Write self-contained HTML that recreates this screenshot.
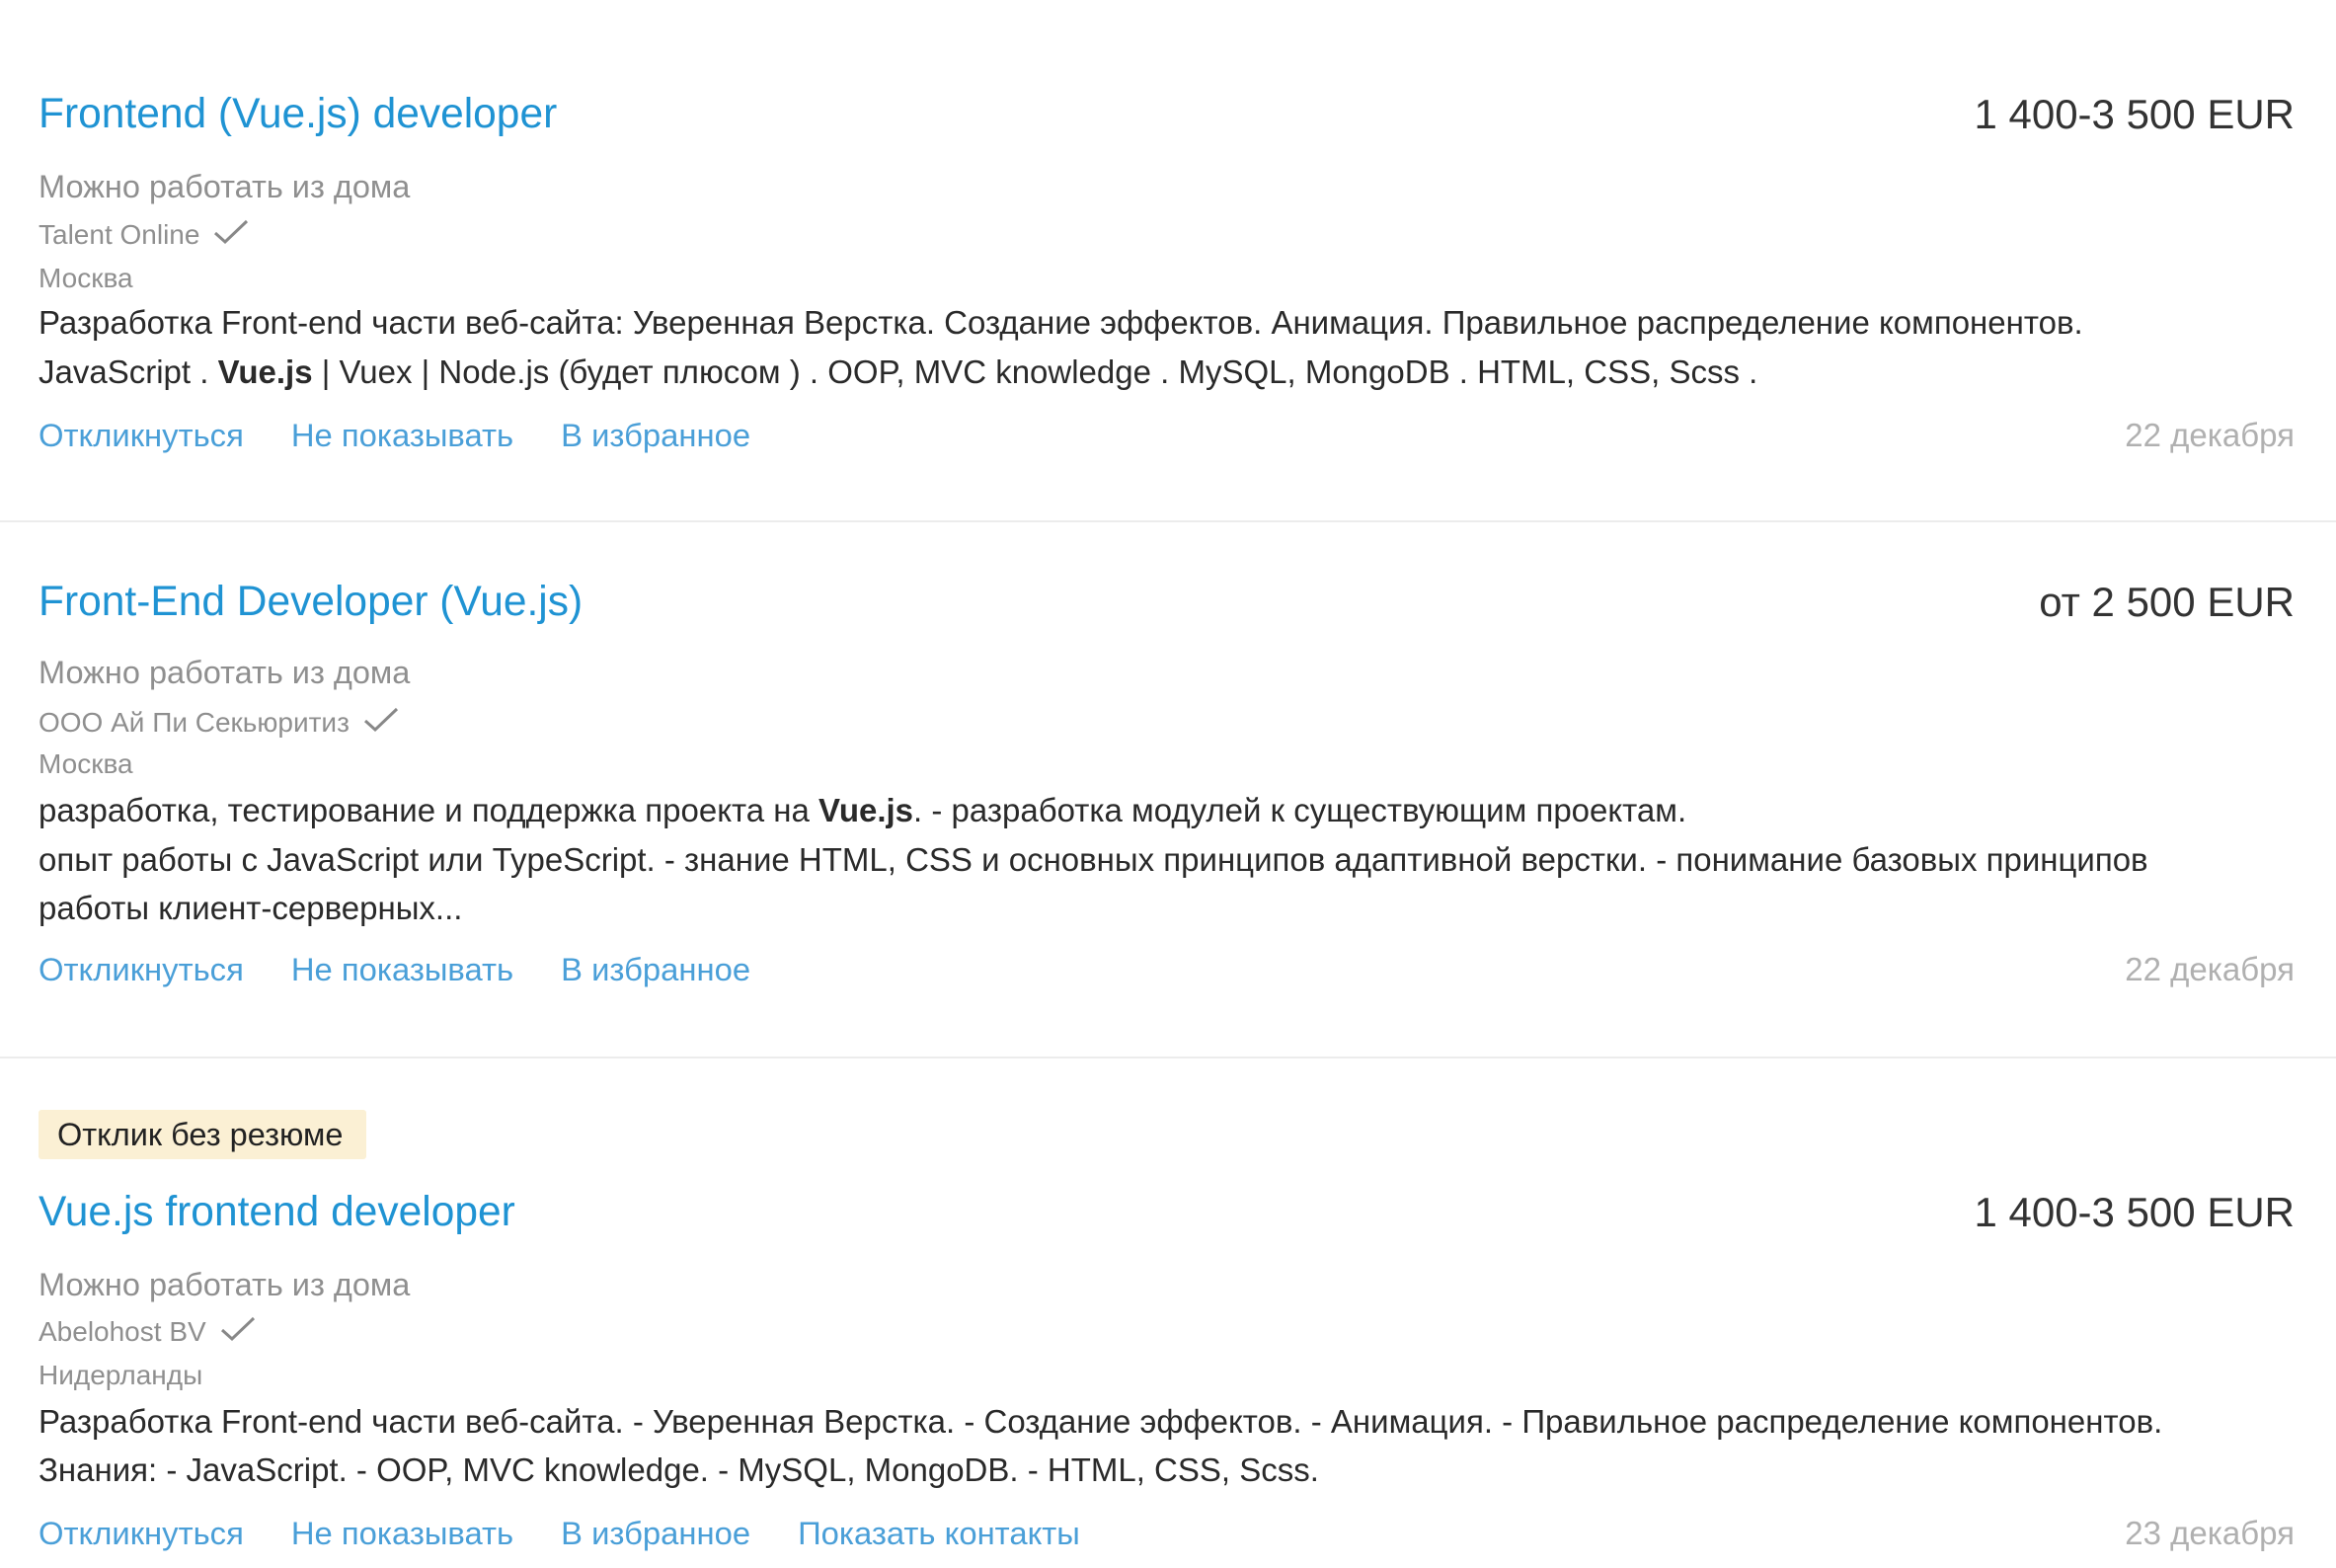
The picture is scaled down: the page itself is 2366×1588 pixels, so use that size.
<!DOCTYPE html>
<html><head><meta charset="utf-8"><style>
body{margin:0;width:2366px;height:1588px;background:#fff;position:relative;overflow:hidden;font-family:"Liberation Sans",Arial,sans-serif;}
.l{position:absolute;left:39px;height:50px;line-height:50px;white-space:nowrap;}
.r{position:absolute;right:42px;height:50px;line-height:50px;white-space:nowrap;}
.t{font-size:42.5px;color:#1f93d3;}
.s{font-size:42px;color:#333;}
.m{font-size:32.5px;color:#8f8f8f;}
.c{font-size:28px;color:#8f8f8f;}
.d{font-size:33px;color:#2a2a2a;}
.k{font-size:32.8px;color:#4a9fd8;}
.k span{margin-right:48px;}
.dt{font-size:33px;color:#b0b0b0;}
.sep{position:absolute;left:0;width:2366px;height:2px;background:#ececec;}
.chk{display:inline-block;vertical-align:middle;margin-left:14px;margin-top:-10px;}
.badge{position:absolute;left:39px;top:1124px;width:332px;height:50px;background:#fbf0d4;border-radius:3px;font-size:32.5px;line-height:50px;color:#222;text-indent:19px;}
</style></head><body>
<svg width="0" height="0" style="position:absolute"><defs><symbol id="ck" viewBox="0 0 36 26"><path d="M2 14 L12 23 L34 2" fill="none" stroke="#888" stroke-width="3"/></symbol></defs></svg>

<div class="l t" style="top:91px">Frontend (Vue.js) developer</div>
<div class="r s" style="top:91px">1 400-3 500 EUR</div>
<div class="l m" style="top:164px">Можно работать из дома</div>
<div class="l c" style="top:213px">Talent Online<svg class="chk" width="36" height="26"><use href="#ck"/></svg></div>
<div class="l c" style="top:257px">Москва</div>
<div class="l d" style="top:302px">Разработка Front-end части веб-сайта: Уверенная Верстка. Создание эффектов. Анимация. Правильное распределение компонентов.</div>
<div class="l d" style="top:352px">JavaScript . <b>Vue.js</b> | Vuex | Node.js (будет плюсом ) . OOP, MVC knowledge . MySQL, MongoDB . HTML, CSS, Scss .</div>
<div class="l k" style="top:416px"><span>Откликнуться</span><span>Не показывать</span><span>В избранное</span></div>
<div class="r dt" style="top:416px">22 декабря</div>
<div class="sep" style="top:527px"></div>

<div class="l t" style="top:585px">Front-End Developer (Vue.js)</div>
<div class="r s" style="top:585px">от 2 500 EUR</div>
<div class="l m" style="top:656px">Можно работать из дома</div>
<div class="l c" style="top:707px">ООО Ай Пи Секьюритиз<svg class="chk" width="36" height="26"><use href="#ck"/></svg></div>
<div class="l c" style="top:749px">Москва</div>
<div class="l d" style="top:796px">разработка, тестирование и поддержка проекта на <b>Vue.js</b>. - разработка модулей к существующим проектам.</div>
<div class="l d" style="top:846px">опыт работы с JavaScript или TypeScript. - знание HTML, CSS и основных принципов адаптивной верстки. - понимание базовых принципов</div>
<div class="l d" style="top:895px">работы клиент-серверных...</div>
<div class="l k" style="top:957px"><span>Откликнуться</span><span>Не показывать</span><span>В избранное</span></div>
<div class="r dt" style="top:957px">22 декабря</div>
<div class="sep" style="top:1070px"></div>

<div class="badge">Отклик без резюме</div>
<div class="l t" style="top:1203px">Vue.js frontend developer</div>
<div class="r s" style="top:1203px">1 400-3 500 EUR</div>
<div class="l m" style="top:1276px">Можно работать из дома</div>
<div class="l c" style="top:1324px">Abelohost BV<svg class="chk" width="36" height="26"><use href="#ck"/></svg></div>
<div class="l c" style="top:1368px">Нидерланды</div>
<div class="l d" style="top:1415px">Разработка Front-end части веб-сайта. - Уверенная Верстка. - Создание эффектов. - Анимация. - Правильное распределение компонентов.</div>
<div class="l d" style="top:1464px">Знания: - JavaScript. - OOP, MVC knowledge. - MySQL, MongoDB. - HTML, CSS, Scss.</div>
<div class="l k" style="top:1528px"><span>Откликнуться</span><span>Не показывать</span><span>В избранное</span><span>Показать контакты</span></div>
<div class="r dt" style="top:1528px">23 декабря</div>
</body></html>
